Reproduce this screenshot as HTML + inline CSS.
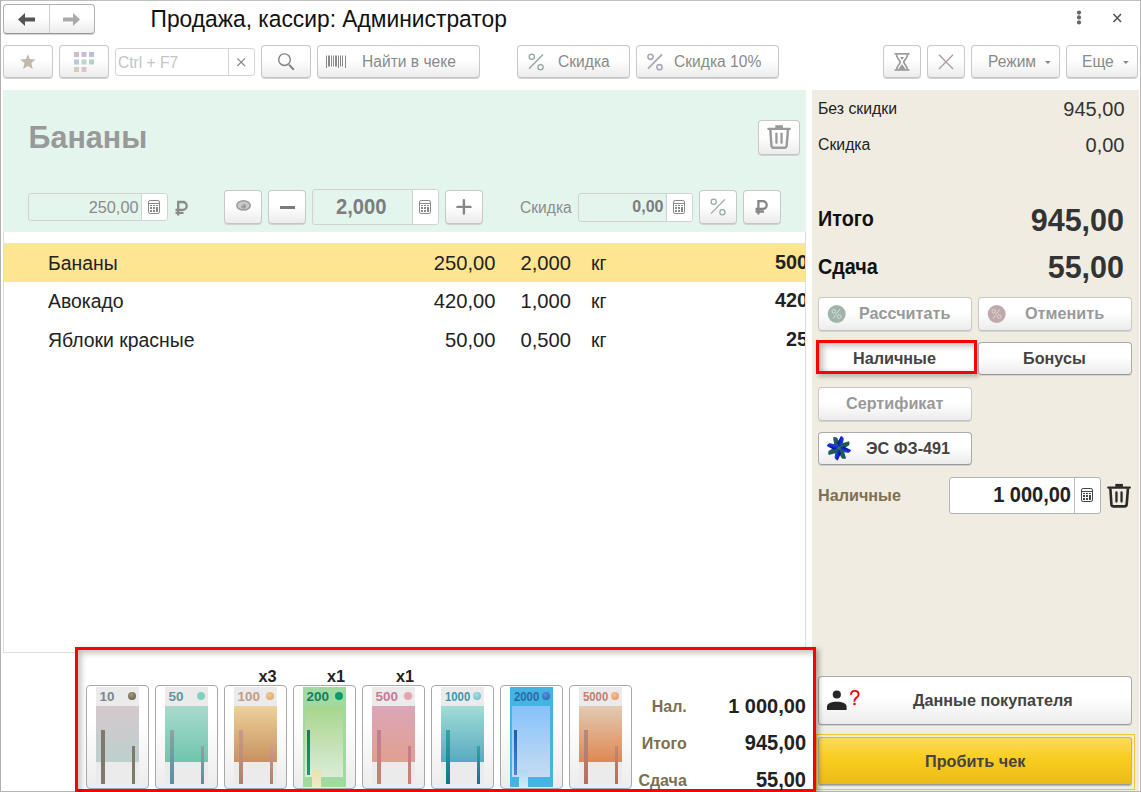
<!DOCTYPE html>
<html><head><meta charset="utf-8">
<style>
*{margin:0;padding:0;box-sizing:border-box}
html,body{width:1141px;height:792px;overflow:hidden;background:#fff;font-family:"Liberation Sans",sans-serif}
.a{position:absolute}
.t{position:absolute;white-space:nowrap;line-height:1}
.btn{position:absolute;border:1px solid #c8c8c8;border-bottom-color:#c4c4c4;border-radius:4px;background:linear-gradient(#fff 0%,#fff 45%,#ececec 100%);box-shadow:0 1px 0 #d2d2d2}
.fld{position:absolute;border:1px solid #cfcfcf;border-radius:3px}
svg{position:absolute;overflow:visible}
.card{position:absolute;top:685px;width:63px;height:104px;border:1px solid #a9a9a9;border-radius:4px;background:linear-gradient(#fff 0%,#fff 35%,#ececec 100%)}
</style></head><body>
<div class="a" style="left:0;top:0;width:1141px;height:1px;background:#bdbdbd"></div>
<div class="a" style="left:0;top:0;width:1px;height:792px;background:#b0b0b0"></div>
<div class="a" style="left:1140px;top:0;width:1px;height:792px;background:#b8b8b8"></div>
<div class="a" style="left:0;top:791px;width:1141px;height:1px;background:#b4b4b4"></div>
<div class="btn" style="left:3px;top:4px;width:92px;height:30px;border-color:#b0b0b0;border-bottom-color:#999"></div>
<div class="a" style="left:49px;top:5px;width:1px;height:28px;background:#cfcfcf"></div>
<svg style="left:0;top:0" width="100" height="40"><path d="M18 19.5 L25 13 L25 17.5 L35 17.5 L35 21.5 L25 21.5 L25 26 Z" fill="#555"/><path d="M80 19.5 L73 13 L73 17.5 L63 17.5 L63 21.5 L73 21.5 L73 26 Z" fill="#aaa"/></svg>
<div class="t" style="left:150.5px;top:7.80px;font-size:22.8px;color:#111;transform:scaleY(1.05);transform-origin:0 84.66%;">Продажа, кассир: Администратор</div>
<svg style="left:1070px;top:5px" width="70" height="30"><circle cx="9" cy="7.6" r="2.1" fill="#666"/><circle cx="9" cy="12.4" r="2.1" fill="#666"/><circle cx="9" cy="17.4" r="2.1" fill="#666"/><path d="M43.5 9 L51 17 M51 9 L43.5 17" stroke="#555" stroke-width="1.6"/></svg>
<div class="btn" style="left:3px;top:45px;width:50px;height:33px"></div>
<svg style="left:0;top:40px" width="60" height="40"><path d="M27.9 13.9 L29.8 19.1 L35.6 19.4 L31.4 23 L32.7 28.9 L27.9 26 L23.1 28.9 L24.4 23 L20.2 19.4 L26 19.1 Z" fill="#c3b9ab"/></svg>
<div class="btn" style="left:59px;top:45px;width:50px;height:33px"></div>
<svg style="left:0;top:40px" width="120" height="40">
<rect x="74" y="12" width="5" height="5" fill="#d2bcc4"/><rect x="81.5" y="12" width="5" height="5" fill="#cbbad3"/><rect x="89" y="12" width="5" height="5" fill="#bbbfd3"/>
<rect x="74" y="19.5" width="5" height="5" fill="#bac8d3"/><rect x="81.5" y="19.5" width="5" height="5" fill="#bcd3d0"/><rect x="89" y="19.5" width="5" height="5" fill="#b4cfc8"/>
<rect x="74" y="27" width="5" height="5" fill="#d3cbbd"/><rect x="81.5" y="27" width="5" height="5" fill="#d9c7c6"/></svg>
<div class="fld" style="left:115px;top:48px;width:140px;height:28px;border-color:#d5d5d5"></div>
<div class="a" style="left:228px;top:49px;width:1px;height:26px;background:#d5d5d5"></div>
<div class="t" style="left:118px;top:54.79px;font-size:15.6px;color:#c4c4c4;">Ctrl + F7</div>
<svg style="left:0;top:40px" width="260" height="40"><path d="M237.3 18.3 L245 26 M245 18.3 L237.3 26" stroke="#888" stroke-width="1.2"/></svg>
<div class="btn" style="left:261px;top:45px;width:50px;height:33px"></div>
<svg style="left:0;top:40px" width="320" height="40"><circle cx="284.5" cy="19.7" r="5.8" fill="none" stroke="#808080" stroke-width="1.4"/><path d="M289 24.6 L293.8 29.8" stroke="#808080" stroke-width="2"/></svg>
<div class="btn" style="left:317px;top:45px;width:163px;height:33px"></div>
<svg style="left:0;top:40px" width="360" height="40" fill="#8a8a8a"><rect x="326" y="15.5" width="1" height="12.5"/><rect x="328" y="15.5" width="2" height="11"/><rect x="331" y="15.5" width="1" height="11"/><rect x="333" y="15.5" width="1" height="11"/><rect x="335" y="15.5" width="2" height="11"/><rect x="338" y="15.5" width="1" height="12.5"/><rect x="340" y="15.5" width="1" height="11"/><rect x="342" y="15.5" width="1" height="11"/><rect x="345" y="15.5" width="1" height="12.5"/></svg>
<div class="t" style="left:362px;top:53.79px;font-size:15.6px;color:#8a8a8a;">Найти в чеке</div>
<div class="btn" style="left:517px;top:45px;width:113px;height:33px"></div>
<svg style="left:0;top:40px" width="560" height="40"><circle cx="531.8" cy="16.8" r="2.6" fill="none" stroke="#90a79b" stroke-width="1.3"/><circle cx="540.5" cy="27.2" r="2.6" fill="none" stroke="#90a79b" stroke-width="1.3"/><path d="M529 28.7 L543 14.5" stroke="#90a79b" stroke-width="1.3"/></svg>
<div class="t" style="left:558px;top:53.79px;font-size:15.6px;color:#8a8a8a;">Скидка</div>
<div class="btn" style="left:636px;top:45px;width:143px;height:33px"></div>
<svg style="left:0;top:40px" width="680" height="40"><circle cx="650.5" cy="16.8" r="2.6" fill="none" stroke="#a7abba" stroke-width="1.6"/><circle cx="659.5" cy="27.2" r="2.6" fill="none" stroke="#a7abba" stroke-width="1.6"/><path d="M648 28.7 L662 14.5" stroke="#a7abba" stroke-width="1.8"/></svg>
<div class="t" style="left:674px;top:53.79px;font-size:15.6px;color:#8a8a8a;">Скидка 10%</div>
<div class="btn" style="left:883px;top:45px;width:38px;height:33px"></div>
<svg style="left:0;top:0" width="1141" height="792"><g fill="#9a9a9a"><rect x="894.5" y="53" width="15" height="1.7"/><rect x="894.5" y="69.1" width="15" height="1.7"/><path d="M900 57 L904 57 L902 59.9 Z"/><path d="M898.4 69.3 L905.6 69.3 L902.3 64.5 L901.7 64.5 Z"/></g><g fill="none" stroke="#9a9a9a" stroke-width="1.7"><path d="M896.5 54.5 C896.5 58.6 900.2 60 900.2 62.1 C900.2 64.2 896.7 65.7 896.7 69.3"/><path d="M907.5 54.5 C907.5 58.6 903.8 60 903.8 62.1 C903.8 64.2 907.3 65.7 907.3 69.3"/></g></svg>
<div class="btn" style="left:927px;top:45px;width:38px;height:33px"></div>
<svg style="left:0;top:40px" width="960" height="40"><path d="M939 14.8 L953 29 M953 14.8 L939 29" stroke="#b09a9a" stroke-width="1.3"/></svg>
<div class="btn" style="left:971px;top:45px;width:89px;height:33px"></div>
<div class="t" style="left:988px;top:53.79px;font-size:15.6px;color:#8a8a8a;">Режим</div>
<svg style="left:0;top:40px" width="1060" height="40"><path d="M1045 21 L1050.8 21 L1047.9 23.9 Z" fill="#8a8a8a"/></svg>
<div class="btn" style="left:1066px;top:45px;width:72px;height:33px"></div>
<div class="t" style="left:1082px;top:53.79px;font-size:15.6px;color:#8a8a8a;">Еще</div>
<svg style="left:0;top:40px" width="1140" height="40"><path d="M1123 21 L1128.8 21 L1125.9 23.9 Z" fill="#8a8a8a"/></svg>
<div class="a" style="left:3px;top:90px;width:803px;height:563px;border:1px solid #dedede;border-top:none"></div>
<div class="a" style="left:3px;top:90px;width:803px;height:142px;background:#e4f5ee"></div>
<div class="t" style="left:28.5px;top:122.18px;font-size:30.5px;color:#999;font-weight:700;">Бананы</div>
<div class="btn" style="left:758px;top:120px;width:42px;height:35px"></div>
<svg style="left:0;top:0" width="1141" height="792" overflow="visible"><g fill="none" stroke="#9a9a9a" stroke-linecap="round"><rect x="775.3000000000001" y="125.2" width="7.6" height="3" fill="#9a9a9a" stroke="none"/><path d="M768.3000000000001 128.85 H789.8000000000001" stroke-width="2.3"/><path d="M770.35 129.7 L771.4 145.7 Q771.6 147.7 773.6 147.7 L784.5 147.7 Q786.5 147.7 786.7 145.7 L787.95 129.7" stroke-width="2.4" stroke-linecap="butt"/><path d="M776.45 133.6 V142.8 M781.5500000000001 133.6 V142.8" stroke-width="2.3"/></g></svg>
<div class="fld" style="left:28px;top:193px;width:140px;height:28px;border-color:#d2d2d2"></div>
<div class="a" style="left:141px;top:194px;width:26px;height:26px;background:#fff;border-left:1px solid #d2d2d2;border-radius:0 2px 2px 0"></div>
<div class="t" style="right:1002.5px;text-align:right;top:199.20px;font-size:16.3px;color:#8a8a8a;">250,00</div>
<svg style="left:148px;top:200px" width="13" height="15"><rect x="0.5" y="0.5" width="11" height="13" rx="1.6" fill="none" stroke="#888" stroke-width="1"/><g fill="#888"><rect x="1" y="3" width="10" height="1"/><rect x="2" y="5" width="2" height="1"/><rect x="5" y="5" width="2" height="1"/><rect x="8" y="5" width="2" height="1"/><rect x="2" y="7" width="2" height="2"/><rect x="5" y="7" width="2" height="2"/><rect x="8" y="7" width="2" height="5"/><rect x="2" y="10" width="2" height="2"/><rect x="5" y="10" width="2" height="2"/></g></svg>
<svg style="left:175px;top:201px" width="13" height="16"><path d="M3.2 14.5 V1 H7.8 A3.9 3.9 0 0 1 7.8 8.8 H0.5 M0.5 11.8 H8.5" fill="none" stroke="#8a8a8a" stroke-width="2.3"/></svg>
<div class="btn" style="left:224px;top:190px;width:38px;height:34px"></div>
<svg style="left:0;top:0" width="260" height="230"><ellipse cx="243.5" cy="205.4" rx="6.7" ry="4.7" fill="#c9c9c9" stroke="#9c9c9c" stroke-width="1.5"/><circle cx="243.6" cy="206.3" r="2.4" fill="#9a9a9a"/><circle cx="242.4" cy="205.2" r="1" fill="#c9c9c9"/></svg>
<div class="btn" style="left:268px;top:190px;width:38px;height:34px"></div>
<div class="a" style="left:280px;top:205.5px;width:14.5px;height:3px;background:#7b7b7b"></div>
<div class="fld" style="left:312px;top:189px;width:127px;height:36px;border-color:#d2d2d2"></div>
<div class="a" style="left:412px;top:190px;width:26px;height:34px;background:#fff;border-left:1px solid #d2d2d2;border-radius:0 2px 2px 0"></div>
<div class="t" style="left:336px;top:197.10px;font-size:20.2px;color:#7d7d7d;font-weight:700;transform:scaleY(1.07);transform-origin:0 84.66%;">2,000</div>
<svg style="left:419px;top:200px" width="13" height="15"><rect x="0.5" y="0.5" width="11" height="13" rx="1.6" fill="none" stroke="#888" stroke-width="1"/><g fill="#888"><rect x="1" y="3" width="10" height="1"/><rect x="2" y="5" width="2" height="1"/><rect x="5" y="5" width="2" height="1"/><rect x="8" y="5" width="2" height="1"/><rect x="2" y="7" width="2" height="2"/><rect x="5" y="7" width="2" height="2"/><rect x="8" y="7" width="2" height="5"/><rect x="2" y="10" width="2" height="2"/><rect x="5" y="10" width="2" height="2"/></g></svg>
<div class="btn" style="left:445px;top:190px;width:38px;height:34px"></div>
<svg style="left:0;top:190px" width="480" height="34"><path d="M457.4 16.9 H470.5 M463.9 10.2 V23.6" stroke="#878787" stroke-width="2.4" stroke-linecap="round"/></svg>
<div class="t" style="left:520px;top:199.79px;font-size:15.6px;color:#8c8c8c;">Скидка</div>
<div class="fld" style="left:578px;top:193px;width:115px;height:29px;border-color:#d2d2d2"></div>
<div class="a" style="left:666px;top:194px;width:26px;height:27px;background:#fff;border-left:1px solid #d2d2d2;border-radius:0 2px 2px 0"></div>
<div class="t" style="right:477.5px;text-align:right;top:199.45px;font-size:16px;color:#7d7d7d;font-weight:700;">0,00</div>
<svg style="left:673px;top:200px" width="13" height="15"><rect x="0.5" y="0.5" width="11" height="13" rx="1.6" fill="none" stroke="#888" stroke-width="1"/><g fill="#888"><rect x="1" y="3" width="10" height="1"/><rect x="2" y="5" width="2" height="1"/><rect x="5" y="5" width="2" height="1"/><rect x="8" y="5" width="2" height="1"/><rect x="2" y="7" width="2" height="2"/><rect x="5" y="7" width="2" height="2"/><rect x="8" y="7" width="2" height="5"/><rect x="2" y="10" width="2" height="2"/><rect x="5" y="10" width="2" height="2"/></g></svg>
<div class="btn" style="left:699px;top:190px;width:38px;height:34px"></div>
<svg style="left:0;top:190px" width="740" height="34"><circle cx="713.7" cy="11.8" r="2.6" fill="none" stroke="#92a99d" stroke-width="1.2"/><circle cx="722.4" cy="22.3" r="2.6" fill="none" stroke="#92a99d" stroke-width="1.2"/><path d="M710.9 23.7 L724.9 9.4" stroke="#92a99d" stroke-width="1.2"/></svg>
<div class="btn" style="left:743px;top:190px;width:38px;height:34px"></div>
<svg style="left:755px;top:200px" width="13" height="16"><path d="M3.4 14.5 V1.2 H7.8 A3.9 3.9 0 0 1 7.8 9 H0.5 M0.5 11.6 H9" fill="none" stroke="#858585" stroke-width="2.3"/></svg>
<div class="a" style="left:3px;top:243px;width:803px;height:1px;background:#e3e3ea"></div>
<div class="a" style="left:4px;top:244px;width:801px;height:38px;background:#fde592"></div>
<div class="a" style="left:0;top:0;width:1141px;height:400px;clip-path:inset(0 336px 0 0)">
<div class="t" style="left:48px;top:253.58px;font-size:19.4px;color:#222;">Бананы</div>
<div class="t" style="right:645.5px;text-align:right;top:252.90px;font-size:20.2px;color:#222;">250,00</div>
<div class="t" style="right:570px;text-align:right;top:252.90px;font-size:20.2px;color:#222;">2,000</div>
<div class="t" style="left:591px;top:253.58px;font-size:19.4px;color:#222;">кг</div>
<div class="t" style="left:775px;top:253.24px;font-size:19.8px;color:#222;font-weight:700;">500,00</div>
<div class="t" style="left:48px;top:291.58px;font-size:19.4px;color:#222;">Авокадо</div>
<div class="t" style="right:645.5px;text-align:right;top:290.90px;font-size:20.2px;color:#222;">420,00</div>
<div class="t" style="right:570px;text-align:right;top:290.90px;font-size:20.2px;color:#222;">1,000</div>
<div class="t" style="left:591px;top:291.58px;font-size:19.4px;color:#222;">кг</div>
<div class="t" style="left:775px;top:291.24px;font-size:19.8px;color:#222;font-weight:700;">420,00</div>
<div class="t" style="left:48px;top:330.58px;font-size:19.4px;color:#222;">Яблоки красные</div>
<div class="t" style="right:645.5px;text-align:right;top:329.90px;font-size:20.2px;color:#222;">50,00</div>
<div class="t" style="right:570px;text-align:right;top:329.90px;font-size:20.2px;color:#222;">0,500</div>
<div class="t" style="left:591px;top:330.58px;font-size:19.4px;color:#222;">кг</div>
<div class="t" style="left:786px;top:330.24px;font-size:19.8px;color:#222;font-weight:700;">250,00</div>
</div>
<div class="a" style="left:812px;top:90px;width:327px;height:701px;background:#f0ece2"></div>
<div class="t" style="left:818px;top:100.62px;font-size:15.8px;color:#222;">Без скидки</div>
<div class="t" style="right:16.5px;text-align:right;top:98.57px;font-size:20px;color:#333;">945,00</div>
<div class="t" style="left:818px;top:136.62px;font-size:15.8px;color:#222;">Скидка</div>
<div class="t" style="right:16.5px;text-align:right;top:134.57px;font-size:20px;color:#333;">0,00</div>
<div class="t" style="left:818px;top:210.24px;font-size:19.8px;color:#111;font-weight:700;transform:scaleY(1.07);transform-origin:0 84.66%;">Итого</div>
<div class="t" style="right:17px;text-align:right;top:204.68px;font-size:30.5px;color:#333;font-weight:700;">945,00</div>
<div class="t" style="left:818px;top:258.24px;font-size:19.8px;color:#111;font-weight:700;transform:scaleY(1.07);transform-origin:0 84.66%;">Сдача</div>
<div class="t" style="right:17px;text-align:right;top:252.18px;font-size:30.5px;color:#333;font-weight:700;">55,00</div>
<div class="btn" style="left:818px;top:297px;width:154px;height:34px"></div>
<svg style="left:827px;top:305px" width="20" height="20"><circle cx="9.7" cy="9" r="9" fill="#a0b4aa"/><circle cx="6.8" cy="6.3" r="1.8" fill="none" stroke="#d8e2dc" stroke-width="1"/><circle cx="12.3" cy="11.6" r="1.8" fill="none" stroke="#d8e2dc" stroke-width="1"/><path d="M6.2 13.5 L12.8 4.2" stroke="#d8e2dc" stroke-width="1"/></svg>
<div class="t" style="left:859px;top:305.29px;font-size:16.2px;color:#999;font-weight:700;">Рассчитать</div>
<div class="btn" style="left:978px;top:297px;width:154px;height:34px"></div>
<svg style="left:987px;top:305px" width="20" height="20"><circle cx="9.7" cy="9" r="9" fill="#bfa9aa"/><circle cx="6.8" cy="6.3" r="1.8" fill="none" stroke="#e2d6d6" stroke-width="1"/><circle cx="12.3" cy="11.6" r="1.8" fill="none" stroke="#e2d6d6" stroke-width="1"/><path d="M6.2 13.5 L12.8 4.2" stroke="#e2d6d6" stroke-width="1"/></svg>
<div class="t" style="left:1025px;top:305.29px;font-size:16.2px;color:#999;font-weight:700;">Отменить</div>
<div class="a" style="left:819px;top:343px;width:155px;height:28px;background:#fff;box-shadow:inset 5px 4px 6px -1px rgba(0,0,0,.25), inset 0 -2px 3px rgba(0,0,0,.06)"></div>
<div class="a" style="left:816px;top:340px;width:161px;height:34px;border:3px solid #f00;box-shadow:2px 3px 4px rgba(0,0,0,.22)"></div>
<div class="t" style="left:853px;top:350.29px;font-size:16.2px;color:#444;font-weight:700;">Наличные</div>
<div class="btn" style="left:978px;top:342px;width:154px;height:33px;border-color:#aaa;border-bottom-color:#999"></div>
<div class="t" style="left:1023px;top:350.29px;font-size:16.2px;color:#444;font-weight:700;">Бонусы</div>
<div class="btn" style="left:818px;top:387px;width:154px;height:34px"></div>
<div class="t" style="left:846px;top:395.29px;font-size:16.2px;color:#999;font-weight:700;">Сертификат</div>
<div class="btn" style="left:818px;top:432px;width:154px;height:33px;border-color:#aaa;border-bottom-color:#999"></div>
<svg style="left:828px;top:437px" width="23" height="23" viewBox="-10.9 -11.2 23 23"><defs><linearGradient id="bg1" x1="0" y1="0" x2="1" y2="0"><stop offset="0" stop-color="#0008a0"/><stop offset="1" stop-color="#2a48f0"/></linearGradient></defs><path d="M0.9 0.9 L-3 -4.5 L-1.2 -12.2 Q0.3 -12.6 2.4 -10.4 L2.8 -2.8 Z" fill="#1d5c58" transform="rotate(-23)"/><path d="M0.9 0.9 L-3 -4.5 L-1.2 -12.2 Q0.3 -12.6 2.4 -10.4 L2.8 -2.8 Z" fill="url(#bg1)" transform="rotate(15)"/><path d="M0.9 0.9 L-3 -4.5 L-1.2 -12.2 Q0.3 -12.6 2.4 -10.4 L2.8 -2.8 Z" fill="#1d5c58" transform="rotate(61)"/><path d="M0.9 0.9 L-3 -4.5 L-1.2 -12.2 Q0.3 -12.6 2.4 -10.4 L2.8 -2.8 Z" fill="url(#bg1)" transform="rotate(104)"/><path d="M0.9 0.9 L-3 -4.5 L-1.2 -12.2 Q0.3 -12.6 2.4 -10.4 L2.8 -2.8 Z" fill="#1d5c58" transform="rotate(150)"/><path d="M0.9 0.9 L-3 -4.5 L-1.2 -12.2 Q0.3 -12.6 2.4 -10.4 L2.8 -2.8 Z" fill="url(#bg1)" transform="rotate(191)"/><path d="M0.9 0.9 L-3 -4.5 L-1.2 -12.2 Q0.3 -12.6 2.4 -10.4 L2.8 -2.8 Z" fill="#1d5c58" transform="rotate(242)"/><path d="M0.9 0.9 L-3 -4.5 L-1.2 -12.2 Q0.3 -12.6 2.4 -10.4 L2.8 -2.8 Z" fill="url(#bg1)" transform="rotate(286)"/><circle cx="0" cy="0" r="1.6" fill="#2a7a50"/></svg>
<div class="t" style="left:866px;top:440.29px;font-size:16.2px;color:#444;font-weight:700;">ЭС ФЗ-491</div>
<div class="t" style="left:818px;top:486.89px;font-size:16.2px;color:#7f7050;font-weight:700;">Наличные</div>
<div class="fld" style="left:949px;top:477px;width:152px;height:37px;background:#fff;border-color:#b2b2b2"></div>
<div class="a" style="left:1074px;top:478px;width:1px;height:35px;background:#bdbdbd"></div>
<div class="t" style="right:70px;text-align:right;top:485.17px;font-size:20px;color:#222;font-weight:700;transform:scaleY(1.07);transform-origin:0 84.66%;">1 000,00</div>
<svg style="left:1081px;top:488px" width="13" height="15"><rect x="0.5" y="0.5" width="11" height="13" rx="1.6" fill="none" stroke="#444" stroke-width="1"/><g fill="#444"><rect x="1" y="3" width="10" height="1"/><rect x="2" y="5" width="2" height="1"/><rect x="5" y="5" width="2" height="1"/><rect x="8" y="5" width="2" height="1"/><rect x="2" y="7" width="2" height="2"/><rect x="5" y="7" width="2" height="2"/><rect x="8" y="7" width="2" height="5"/><rect x="2" y="10" width="2" height="2"/><rect x="5" y="10" width="2" height="2"/></g></svg>
<svg style="left:0;top:0" width="1141" height="792" overflow="visible"><g fill="none" stroke="#2a2a2a" stroke-linecap="round"><rect x="1115.3" y="483.9" width="7.6" height="3" fill="#2a2a2a" stroke="none"/><path d="M1108.3 487.54999999999995 H1129.8" stroke-width="2.3"/><path d="M1110.35 488.4 L1111.3999999999999 504.4 Q1111.6 506.4 1113.6 506.4 L1124.5 506.4 Q1126.5 506.4 1126.6999999999998 504.4 L1127.9499999999998 488.4" stroke-width="2.6" stroke-linecap="butt"/><path d="M1116.4499999999998 492.29999999999995 V501.5 M1121.55 492.29999999999995 V501.5" stroke-width="2.3"/></g></svg>
<div class="btn" style="left:818px;top:676px;width:314px;height:49px;border-color:#aaa;border-bottom-color:#999"></div>
<svg style="left:826px;top:689px" width="40" height="24"><circle cx="10.8" cy="5.5" r="4.1" fill="#262626"/><path d="M1 21 L1 17.5 C1 14.5 5 12.8 10.8 12.8 C16.6 12.8 20.6 14.5 20.6 17.5 L20.6 21 Z" fill="#262626"/></svg>
<svg style="left:0;top:0" width="1141" height="792"><path d="M851 694.8 C851 692.3 852.5 690.9 854.7 690.9 C857.1 690.9 858.6 692.4 858.6 694.4 C858.6 696.6 856.3 697.6 855.1 699.1 C854.5 699.9 854.4 700.6 854.4 701.7" fill="none" stroke="#f00" stroke-width="1.9"/><circle cx="854.5" cy="704" r="1.3" fill="#f00"/></svg>
<div class="t" style="left:913px;top:691.89px;font-size:16.2px;color:#444;font-weight:700;">Данные покупателя</div>
<div class="a" style="left:816px;top:734px;width:319px;height:56px;border:1px solid #f2c933"></div>
<div class="a" style="left:818px;top:737px;width:314px;height:48px;border:1px solid #b9b39c;border-bottom-color:#9c9c9c;border-radius:3px;background:linear-gradient(#fcda5e,#f9cd1f 45%,#eabb18);box-shadow:0 1px 1px rgba(0,0,0,.25)"></div>
<div class="t" style="left:925px;top:753.29px;font-size:16.2px;color:#444;font-weight:700;">Пробить чек</div>
<div class="a" style="left:75px;top:647px;width:741px;height:145px;border:3px solid #f00;background:#fff;box-shadow:3px 2px 5px rgba(0,0,0,.3)"></div>
<div class="a" style="left:78px;top:650px;width:735px;height:142px;box-shadow:inset 6px 6px 6px -3px rgba(0,0,0,.25)"></div>
<div class="card" style="left:86px"></div>
<div class="a" style="left:96px;top:687px;width:43px;height:97px;background:#ebebeb"></div>
<div class="a" style="left:96px;top:706px;width:43px;height:56px;background:linear-gradient(#d5c8cd,#bcd0cd)"></div>
<div class="a" style="left:101px;top:730px;width:4px;height:54px;background:linear-gradient(#807a6c,#7f7a6c)"></div>
<div class="a" style="left:132px;top:746px;width:3px;height:38px;background:linear-gradient(#807a6c,#7f7a6c)"></div>
<div class="t" style="left:99.5px;top:690px;font-size:13.5px;font-weight:bold;color:#7f878b">10</div>
<div class="a" style="left:128px;top:692px;width:8px;height:8px;border-radius:50%;background:radial-gradient(circle at 40% 35%,#a89880,#5e5040)"></div>
<div class="card" style="left:155px"></div>
<div class="a" style="left:165px;top:687px;width:43px;height:97px;background:#ebebeb"></div>
<div class="a" style="left:165px;top:706px;width:43px;height:56px;background:linear-gradient(#a9dace,#6fc5ad)"></div>
<div class="a" style="left:170px;top:730px;width:4px;height:54px;background:linear-gradient(#8ea2a2,#5b8ea1)"></div>
<div class="a" style="left:201px;top:746px;width:3px;height:38px;background:linear-gradient(#8ea2a2,#5b8ea1)"></div>
<div class="t" style="left:168.5px;top:690px;font-size:13.5px;font-weight:bold;color:#5c98a2">50</div>
<div class="a" style="left:197px;top:692px;width:8px;height:8px;border-radius:50%;background:#7fd3c2"></div>
<div class="card" style="left:224px"></div>
<div class="a" style="left:234px;top:687px;width:43px;height:97px;background:#ebebeb"></div>
<div class="a" style="left:234px;top:706px;width:43px;height:56px;background:linear-gradient(#edd19c,#c8915f)"></div>
<div class="a" style="left:239px;top:730px;width:4px;height:54px;background:linear-gradient(#cc9a8c,#b07f6c)"></div>
<div class="a" style="left:270px;top:746px;width:3px;height:38px;background:linear-gradient(#cc9a8c,#b07f6c)"></div>
<div class="t" style="left:237.5px;top:690px;font-size:13.5px;font-weight:bold;color:#c39b8a">100</div>
<div class="a" style="left:266px;top:692px;width:8px;height:8px;border-radius:50%;background:radial-gradient(circle at 40% 35%,#f0c890,#d8a070)"></div>
<div class="card" style="left:293px"></div>
<div class="a" style="left:303px;top:687px;width:43px;height:100px;background:#a0daa0"></div>
<div class="a" style="left:305px;top:706px;width:38px;height:71px;background:linear-gradient(#a6d68c,#dcecd8)"></div>
<div class="a" style="left:307px;top:730px;width:3px;height:45px;background:linear-gradient(#137c5c,#0aa070)"></div>
<div class="a" style="left:312px;top:770px;width:9px;height:17px;background:linear-gradient(#e8e2a8,#f0ead0)"></div>
<div class="t" style="left:306.5px;top:690px;font-size:13.5px;font-weight:bold;color:#197d5c">200</div>
<div class="a" style="left:335px;top:692px;width:8px;height:8px;border-radius:50%;background:#0b9a70"></div>
<div class="card" style="left:362px"></div>
<div class="a" style="left:372px;top:687px;width:43px;height:97px;background:#ebebeb"></div>
<div class="a" style="left:372px;top:706px;width:43px;height:56px;background:linear-gradient(#dca6b9,#e0a08f)"></div>
<div class="a" style="left:377px;top:730px;width:4px;height:54px;background:linear-gradient(#c27d95,#cb8170)"></div>
<div class="a" style="left:408px;top:746px;width:3px;height:38px;background:linear-gradient(#c27d95,#cb8170)"></div>
<div class="t" style="left:375.5px;top:690px;font-size:13.5px;font-weight:bold;color:#c67b92">500</div>
<div class="a" style="left:404px;top:692px;width:8px;height:8px;border-radius:50%;background:#e9a3ab"></div>
<div class="card" style="left:431px"></div>
<div class="a" style="left:441px;top:687px;width:43px;height:97px;background:#ebebeb"></div>
<div class="a" style="left:441px;top:706px;width:43px;height:56px;background:linear-gradient(#a1ddd5,#58a9c2)"></div>
<div class="a" style="left:446px;top:730px;width:4px;height:54px;background:linear-gradient(#3f9fa4,#08798d)"></div>
<div class="a" style="left:477px;top:746px;width:3px;height:38px;background:linear-gradient(#3f9fa4,#08798d)"></div>
<div class="t" style="left:444.5px;top:690px;font-size:13.5px;font-weight:bold;transform:scaleX(0.84);transform-origin:0 0;color:#3e97a6">1000</div>
<div class="a" style="left:473px;top:692px;width:8px;height:8px;border-radius:50%;background:radial-gradient(circle at 40% 35%,#a8e0e0,#58b8c8)"></div>
<div class="card" style="left:500px"></div>
<div class="a" style="left:510px;top:687px;width:43px;height:100px;background:#44b4e2"></div>
<div class="a" style="left:512px;top:706px;width:38px;height:71px;background:linear-gradient(#86c2fa,#c6dcf2)"></div>
<div class="a" style="left:514px;top:730px;width:3px;height:45px;background:linear-gradient(#1a5ea6,#4486d8)"></div>
<div class="a" style="left:519px;top:770px;width:9px;height:17px;background:linear-gradient(#a8d8f0,#d0ecf8)"></div>
<div class="t" style="left:513.5px;top:690px;font-size:13.5px;font-weight:bold;transform:scaleX(0.84);transform-origin:0 0;color:#2a6aa8">2000</div>
<div class="a" style="left:542px;top:692px;width:8px;height:8px;border-radius:50%;background:radial-gradient(circle at 40% 35%,#5a90d8,#2a5ab0)"></div>
<div class="card" style="left:569px"></div>
<div class="a" style="left:579px;top:687px;width:43px;height:97px;background:#ebebeb"></div>
<div class="a" style="left:579px;top:706px;width:43px;height:56px;background:linear-gradient(#e1cbb3,#e08752)"></div>
<div class="a" style="left:584px;top:730px;width:4px;height:54px;background:linear-gradient(#b98a7a,#b07061)"></div>
<div class="a" style="left:615px;top:746px;width:3px;height:38px;background:linear-gradient(#b98a7a,#b07061)"></div>
<div class="t" style="left:582.5px;top:690px;font-size:13.5px;font-weight:bold;transform:scaleX(0.84);transform-origin:0 0;color:#c0806e">5000</div>
<div class="a" style="left:611px;top:692px;width:8px;height:8px;border-radius:50%;background:radial-gradient(circle at 40% 35%,#f8c090,#e09060)"></div>

<div class="t" style="right:864.5px;text-align:right;top:668.20px;font-size:16.3px;color:#222;font-weight:700;transform:scaleY(1.04);transform-origin:0 84.66%;">x3</div>
<div class="t" style="right:796px;text-align:right;top:668.20px;font-size:16.3px;color:#222;font-weight:700;transform:scaleY(1.04);transform-origin:0 84.66%;">x1</div>
<div class="t" style="right:727px;text-align:right;top:668.20px;font-size:16.3px;color:#222;font-weight:700;transform:scaleY(1.04);transform-origin:0 84.66%;">x1</div>
<div class="t" style="right:454.20000000000005px;text-align:right;top:698.75px;font-size:16px;color:#7d6f4e;font-weight:700;">Нал.</div>
<div class="t" style="right:454.20000000000005px;text-align:right;top:736.45px;font-size:16px;color:#7d6f4e;font-weight:700;">Итого</div>
<div class="t" style="right:454.20000000000005px;text-align:right;top:773.45px;font-size:16px;color:#7d6f4e;font-weight:700;">Сдача</div>
<div class="t" style="right:335px;text-align:right;top:696.07px;font-size:20px;color:#222;font-weight:700;">1 000,00</div>
<div class="t" style="right:335px;text-align:right;top:733.07px;font-size:20px;color:#222;font-weight:700;transform:scaleY(1.07);transform-origin:0 84.66%;">945,00</div>
<div class="t" style="right:335px;text-align:right;top:769.57px;font-size:20px;color:#222;font-weight:700;transform:scaleY(1.07);transform-origin:0 84.66%;">55,00</div>
</body></html>
